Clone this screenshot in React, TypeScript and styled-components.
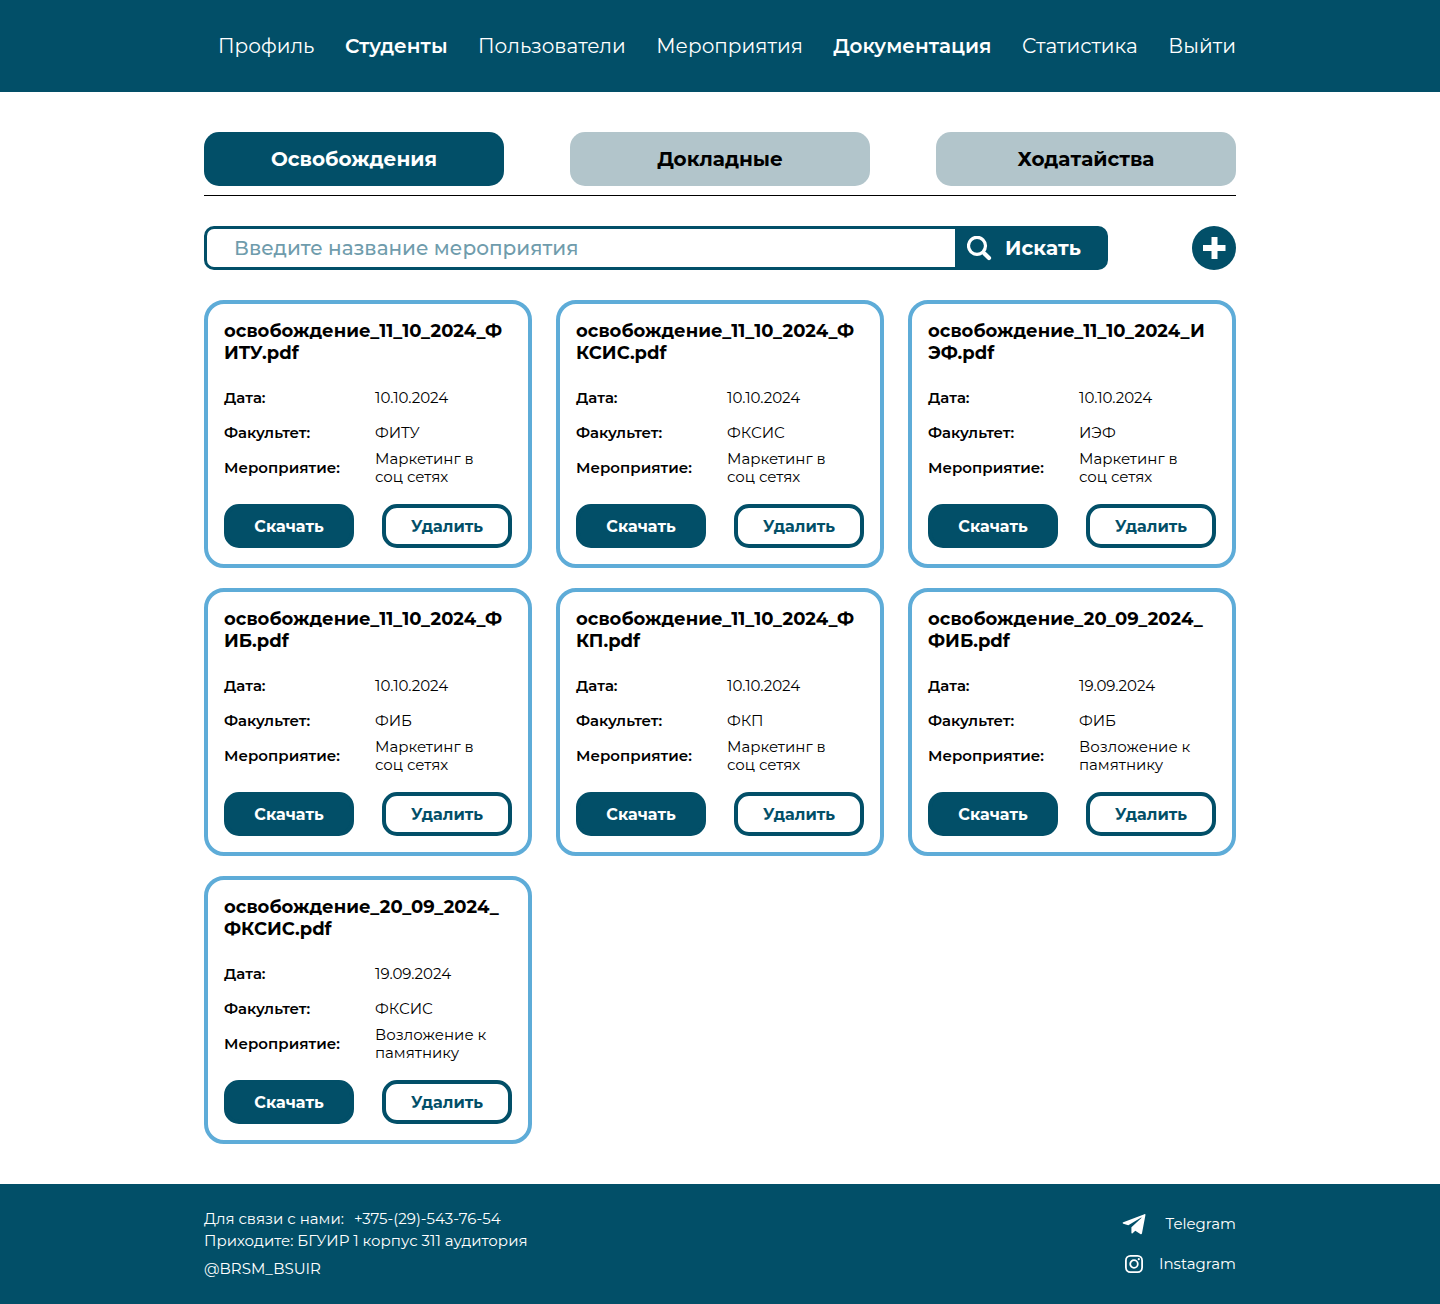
import React from "react";
import styled, { createGlobalStyle } from "styled-components";

const navy = "#024f68";
const sky = "#5eacd8";

const GlobalStyle = createGlobalStyle`
  *, *::before, *::after { box-sizing: border-box; }
  body {
    margin: 0;
    background: #fff;
    color: #000;
    font-family: Montserrat, Inter, "Open Sans", sans-serif;
    font-size: 16px;
    line-height: 18px;
  }
  button, input { font: inherit; }
  button { cursor: pointer; }
  a { color: inherit; text-decoration: none; }
`;

const Page = styled.div`
  min-height: 100vh;
  display: flex;
  flex-direction: column;
`;

const Container = styled.div`
  width: 100%;
  max-width: 1072px;
  margin: 0 auto;
  padding: 0 20px;
`;

const Header = styled.header`
  background: ${navy};
  color: #fff;
`;

const Nav = styled.nav`
  display: flex;
  flex-wrap: wrap;
  justify-content: space-between;
  gap: 8px 20px;
  padding: 34px 0 34px 14px;
`;

const NavLink = styled.a<{ $strong?: boolean }>`
  font-size: 20px;
  line-height: 24px;
  font-weight: ${(p) => (p.$strong ? 600 : 400)};
`;

const Main = styled.main`
  flex: 1;
  padding: 40px 0;
`;

const Tabs = styled.div`
  display: flex;
  flex-wrap: wrap;
  justify-content: space-between;
  gap: 10px;
  padding-bottom: 9px;
  border-bottom: 1px solid #000;
`;

const Tab = styled.button<{ $active?: boolean }>`
  width: 300px;
  height: 54px;
  padding: 0;
  border: 0;
  border-radius: 15px;
  background: ${(p) => (p.$active ? navy : "#b2c5cb")};
  color: ${(p) => (p.$active ? "#fff" : "#000")};
  font-size: 20px;
  line-height: 24px;
  font-weight: 700;
`;

const Toolbar = styled.div`
  display: flex;
  justify-content: space-between;
  gap: 84px;
  margin: 30px 0;
`;

const Search = styled.form`
  flex: 1;
  min-width: 0;
  display: flex;
  height: 44px;
  border: 3px solid ${navy};
  border-radius: 10px;
  background: ${navy};
`;

const SearchInput = styled.input`
  flex: 1;
  min-width: 0;
  padding: 0 27px;
  border: 0;
  border-radius: 7px 0 0 7px;
  outline: 0;
  background: #fff;
  font-size: 20px;
  line-height: 24px;
  font-weight: 500;
  &::placeholder { color: #6f9cac; opacity: 1; }
`;

const SearchButton = styled.button`
  display: flex;
  align-items: center;
  gap: 13px;
  width: 150px;
  padding: 0 0 0 12px;
  border: 0;
  background: transparent;
  color: #fff;
  font-size: 20px;
  line-height: 24px;
  font-weight: 700;
`;

const AddButton = styled.button`
  display: grid;
  place-items: center;
  width: 44px;
  height: 44px;
  padding: 0;
  border: 0;
  border-radius: 50%;
  background: ${navy};
`;

const Grid = styled.div`
  display: grid;
  grid-template-columns: repeat(auto-fill, minmax(320px, 1fr));
  gap: 20px 24px;
`;

const Card = styled.article`
  padding: 16px;
  border: 4px solid ${sky};
  border-radius: 20px;
`;

const Title = styled.h2`
  margin: 0 0 16px;
  font-size: 18px;
  line-height: 22px;
  font-weight: 700;
  word-break: break-all;
`;

const Facts = styled.dl`
  display: grid;
  grid-template-columns: 151px 1fr;
  grid-auto-rows: 35px;
  align-items: center;
  margin: 0 0 19px;
`;

const Label = styled.dt`
  font-size: 15px;
  font-weight: 600;
`;

const Value = styled.dd`
  max-width: 120px;
  margin: 0;
  font-size: 15px;
`;

const Actions = styled.div`
  display: flex;
  justify-content: space-between;
`;

const Action = styled.button<{ $outline?: boolean }>`
  width: 130px;
  height: 44px;
  padding: 0;
  border: 4px solid ${navy};
  border-radius: 15px;
  background: ${(p) => (p.$outline ? "#fff" : navy)};
  color: ${(p) => (p.$outline ? navy : "#fff")};
  line-height: 19px;
  font-weight: 700;
`;

const Footer = styled.footer`
  background: ${navy};
  color: #fff;
  font-size: 15px;
`;

const FooterRow = styled(Container)`
  display: flex;
  justify-content: space-between;
  min-height: 120px;
  padding-top: 24px;
  line-height: 22px;
`;

const Contacts = styled.address`
  font-style: normal;
`;

const ContactLine = styled.p`
  display: flex;
  gap: 10px;
  margin: 0;
`;

const Handle = styled.p`
  margin: 6px 0 0;
`;

const Socials = styled.div`
  display: flex;
  flex-direction: column;
  align-items: flex-end;
  gap: 16px;
  padding-top: 4px;
`;

const Social = styled.a<{ $gap: number }>`
  display: flex;
  align-items: center;
  gap: ${(p) => p.$gap}px;
  height: 24px;
`;

const links = [
  { name: "Профиль" },
  { name: "Студенты", strong: true },
  { name: "Пользователи" },
  { name: "Мероприятия" },
  { name: "Документация", strong: true },
  { name: "Статистика" },
  { name: "Выйти" },
];

const tabs = ["Освобождения", "Докладные", "Ходатайства"];

const marketing = "Маркетинг в соц сетях";
const memorial = "Возложение к памятнику";

const documents = [
  { title: "освобождение_11_10_2024_ФИТУ.pdf", date: "10.10.2024", faculty: "ФИТУ", event: marketing },
  { title: "освобождение_11_10_2024_ФКСИС.pdf", date: "10.10.2024", faculty: "ФКСИС", event: marketing },
  { title: "освобождение_11_10_2024_ИЭФ.pdf", date: "10.10.2024", faculty: "ИЭФ", event: marketing },
  { title: "освобождение_11_10_2024_ФИБ.pdf", date: "10.10.2024", faculty: "ФИБ", event: marketing },
  { title: "освобождение_11_10_2024_ФКП.pdf", date: "10.10.2024", faculty: "ФКП", event: marketing },
  { title: "освобождение_20_09_2024_ФИБ.pdf", date: "19.09.2024", faculty: "ФИБ", event: memorial },
  { title: "освобождение_20_09_2024_ФКСИС.pdf", date: "19.09.2024", faculty: "ФКСИС", event: memorial },
];

const SearchIcon = () => (
  <svg width="25" height="25" viewBox="0 0 25 25" fill="none" stroke="#fff" aria-hidden="true">
    <circle cx="10" cy="9.800" r="8.500" strokeWidth="3.200" />
    <path d="M17.400 17.400l4.600 4.600" strokeWidth="4.200" strokeLinecap="round" />
    <path d="M15.500 15.500l3 3" strokeWidth="3" />
  </svg>
);

const PlusIcon = () => (
  <svg width="24" height="24" viewBox="0 0 24 24" fill="#fff" aria-hidden="true">
    <path d="M9.500 1h6v8h8v6h-8v8h-6v-8H1V9h8.500z" />
  </svg>
);

const TelegramIcon = () => (
  <svg width="24" height="22" viewBox="0 0 24 22" fill="#fff" aria-hidden="true">
    <path d="M22.400 1.200L1.300 9.300c-.9.400-.9 1.100 0 1.400l5 1.600L18.800 4.700c.6-.4 1 0 .6.400L9.400 14.200v5.600c0 .8.600 1 1.200.5l2.700-2.600 5 3.300c.8.500 1.500.2 1.700-.7L23.400 2.300c.2-.9-.3-1.400-1-1.100z" />
  </svg>
);

const InstagramIcon = () => (
  <svg width="20" height="20" viewBox="0 0 20 20" fill="none" stroke="#fff" aria-hidden="true">
    <rect x="1.900" y="1.900" width="16.200" height="16.200" rx="4.500" strokeWidth="1.800" />
    <circle cx="10" cy="10" r="3.800" strokeWidth="1.800" />
    <circle cx="14.800" cy="5.200" r="1.100" fill="#fff" stroke="none" />
  </svg>
);

export default function App() {
  return (
    <Page>
      <GlobalStyle />
      <Header>
        <Container>
          <Nav>
            {links.map((link) => (
              <NavLink key={link.name} href="#" $strong={link.strong}>
                {link.name}
              </NavLink>
            ))}
          </Nav>
        </Container>
      </Header>
      <Main>
        <Container>
          <Tabs>
            {tabs.map((tab, i) => (
              <Tab key={tab} type="button" $active={i === 0}>
                {tab}
              </Tab>
            ))}
          </Tabs>
          <Toolbar>
            <Search onSubmit={(e) => e.preventDefault()}>
              <SearchInput
                type="text"
                aria-label="Введите название мероприятия"
                placeholder="Введите название мероприятия"
              />
              <SearchButton type="submit">
                <SearchIcon />
                Искать
              </SearchButton>
            </Search>
            <AddButton type="button" aria-label="Добавить">
              <PlusIcon />
            </AddButton>
          </Toolbar>
          <Grid>
            {documents.map((doc) => (
              <Card key={doc.title}>
                <Title>{doc.title}</Title>
                <Facts>
                  <Label>Дата:</Label>
                  <Value>{doc.date}</Value>
                  <Label>Факультет:</Label>
                  <Value>{doc.faculty}</Value>
                  <Label>Мероприятие:</Label>
                  <Value>{doc.event}</Value>
                </Facts>
                <Actions>
                  <Action type="button">Скачать</Action>
                  <Action type="button" $outline>
                    Удалить
                  </Action>
                </Actions>
              </Card>
            ))}
          </Grid>
        </Container>
      </Main>
      <Footer>
        <FooterRow>
          <Contacts>
            <ContactLine>
              <span>Для связи с нами:</span>
              <a href="tel:+375295437654">+375-(29)-543-76-54</a>
            </ContactLine>
            <ContactLine>Приходите: БГУИР 1 корпус 311 аудитория</ContactLine>
            <Handle>@BRSM_BSUIR</Handle>
          </Contacts>
          <Socials>
            <Social href="#" $gap={20}>
              <TelegramIcon />
              Telegram
            </Social>
            <Social href="#" $gap={15}>
              <InstagramIcon />
              Instagram
            </Social>
          </Socials>
        </FooterRow>
      </Footer>
    </Page>
  );
}
